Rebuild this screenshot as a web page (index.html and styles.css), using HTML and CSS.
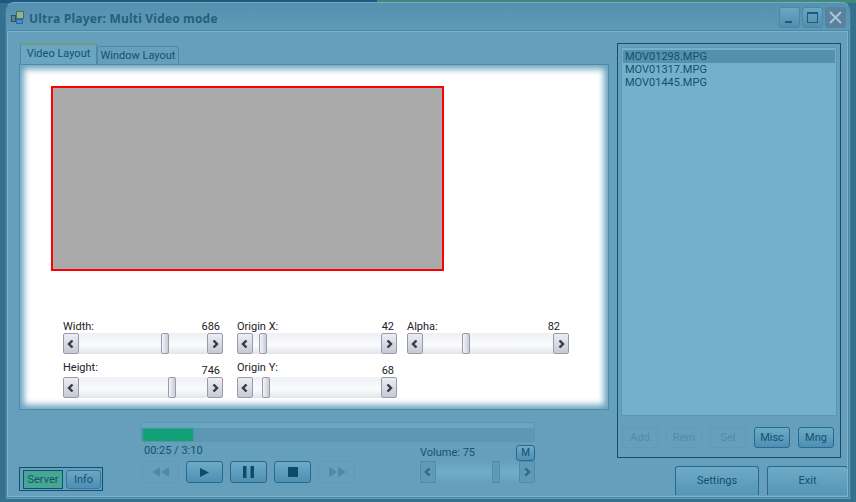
FILE: index.html
```html
<!DOCTYPE html>
<html lang="en">
  <head>
    <meta charset="UTF-8" />
    <title>Ultra Player: Multi Video mode</title>
    <link rel="stylesheet" href="styles.css">
  </head>
  <body>
    <svg class="defs" width="0" height="0">
      <symbol id="left" viewBox="0 0 8 8"><path d="M5.500 0.500 2 4l3.500 3.500" fill="none" stroke="currentColor" stroke-width="2.400"/></symbol>
      <symbol id="right" viewBox="0 0 8 8"><path d="M2.500 0.500 6 4 2.500 7.500" fill="none" stroke="currentColor" stroke-width="2.400"/></symbol>
    </svg>
    <div class="window">
      <div class="titlebar">
        <svg class="app-icon" width="14" height="14" viewBox="0 0 14 14">
          <rect x="0.500" y="4.500" width="4" height="6" fill="#5d7f92" stroke="#2f5266"/>
          <rect x="5.500" y="0.500" width="7" height="7" fill="#8fb58d" stroke="#47706a"/>
          <rect x="5.500" y="8.500" width="6" height="4" fill="#3f8fd0" stroke="#2b6a9c"/>
        </svg>
        <span class="title">Ultra Player: Multi Video mode</span>
        <div class="caption-buttons">
          <div class="caption-btn"><svg width="19" height="19"><rect x="5" y="13" width="7" height="2" fill="#1f5a7a"/></svg></div>
          <div class="caption-btn"><svg width="19" height="19"><rect x="4.500" y="4.500" width="10" height="10" fill="none" stroke="#1f5a7a"/><rect x="4" y="4" width="11" height="2" fill="#1f5a7a"/></svg></div>
          <div class="caption-btn close"><svg width="19" height="19"><path d="M4 4l11 11M15 4 4 15" stroke="#9fcadb" stroke-width="2"/></svg></div>
        </div>
      </div>
      <div class="client">
        <div class="left-col">
          <div class="tabs">
            <div class="tab active">Video Layout</div>
            <div class="tab">Window Layout</div>
          </div>
          <div class="tab-body">
            <div class="preview"></div>
            <div class="sliders">
              <div class="slider">
                <div class="slider-head"><span>Width:</span><span>686</span></div>
                <div class="scroll"><div class="arrow"><svg width="8" height="8"><use href="#left"/></svg></div><div class="track"><div class="thumb" style="margin-left:82px"></div></div><div class="arrow"><svg width="8" height="8"><use href="#right"/></svg></div></div>
              </div>
              <div class="slider">
                <div class="slider-head"><span>Origin X:</span><span>42</span></div>
                <div class="scroll"><div class="arrow"><svg width="8" height="8"><use href="#left"/></svg></div><div class="track"><div class="thumb" style="margin-left:6px"></div></div><div class="arrow"><svg width="8" height="8"><use href="#right"/></svg></div></div>
              </div>
              <div class="slider alpha">
                <div class="slider-head"><span>Alpha:</span><span>82</span></div>
                <div class="scroll"><div class="arrow"><svg width="8" height="8"><use href="#left"/></svg></div><div class="track"><div class="thumb" style="margin-left:39px"></div></div><div class="arrow"><svg width="8" height="8"><use href="#right"/></svg></div></div>
              </div>
              <div class="slider">
                <div class="slider-head"><span class="raised">Height:</span><span>746</span></div>
                <div class="scroll"><div class="arrow"><svg width="8" height="8"><use href="#left"/></svg></div><div class="track"><div class="thumb" style="margin-left:89px"></div></div><div class="arrow"><svg width="8" height="8"><use href="#right"/></svg></div></div>
              </div>
              <div class="slider">
                <div class="slider-head"><span class="raised">Origin Y:</span><span>68</span></div>
                <div class="scroll"><div class="arrow"><svg width="8" height="8"><use href="#left"/></svg></div><div class="track"><div class="thumb" style="margin-left:9px"></div></div><div class="arrow"><svg width="8" height="8"><use href="#right"/></svg></div></div>
              </div>
            </div>
          </div>
          <div class="bottom">
            <div class="modes">
              <div class="mode on">Server</div>
              <div class="mode">Info</div>
            </div>
            <div class="player">
              <div class="progress"><div class="progress-fill"></div></div>
              <div class="player-row">
                <div class="transport-col">
                  <div class="time">00:25 / 3:10</div>
                  <div class="transport">
                    <div class="t-btn off"><svg width="18" height="10" viewBox="0 0 18 10"><path d="M8 0v10L0 5zM17 0v10L9 5z" fill="#4d89a6"/></svg></div>
                    <div class="t-btn"><svg width="9" height="9" viewBox="0 0 9 9"><path d="M0 0v9l9-4.500z" fill="#0e4a69"/></svg></div>
                    <div class="t-btn"><svg width="11" height="12" viewBox="0 0 11 12"><path d="M0 0h3.500v12H0zM7.500 0H11v12H7.500z" fill="#0e4a69"/></svg></div>
                    <div class="t-btn"><svg width="10" height="10"><rect width="10" height="10" fill="#0e4a69"/></svg></div>
                    <div class="t-btn off"><svg width="18" height="10" viewBox="0 0 18 10"><path d="M1 0v10l8-5zM10 0v10l8-5z" fill="#4d89a6"/></svg></div>
                  </div>
                </div>
                <div class="volume">
                  <div class="volume-head"><span>Volume: 75</span><div class="mute">M</div></div>
                  <div class="scroll dim"><div class="arrow"><svg width="8" height="8"><use href="#left"/></svg></div><div class="track"><div class="thumb" style="margin-left:56px"></div></div><div class="arrow"><svg width="8" height="8"><use href="#right"/></svg></div></div>
                </div>
              </div>
            </div>
          </div>
        </div>
        <div class="right-col">
          <div class="list-box">
            <div class="list">
              <div class="list-item selected">MOV01298.MPG</div>
              <div class="list-item">MOV01317.MPG</div>
              <div class="list-item">MOV01445.MPG</div>
            </div>
            <div class="list-buttons">
              <div class="btn off">Add</div>
              <div class="btn off">Rem</div>
              <div class="btn off">Sel</div>
              <div class="btn">Misc</div>
              <div class="btn">Mng</div>
            </div>
          </div>
          <div class="footer-buttons">
            <div class="footer-btn settings">Settings</div>
            <div class="footer-btn exit">Exit</div>
          </div>
        </div>
      </div>
    </div>
  </body>
</html>
```

FILE: styles.css
```css
/* Ultra Player window */
html, body {
  margin: 0;
  height: 100%;
}

body {
  width: 856px;
  height: 502px;
  overflow: hidden;
  background:
    linear-gradient(to right, #1c5a80 0, #1c5a80 377px, #3f8a7c 377px) top / 100% 3px no-repeat,
    #35718f;
  font-family: Roboto, "Liberation Sans", sans-serif;
  font-size: 11px;
  color: #14516f;
}

.defs {
  position: absolute;
}

.window {
  box-sizing: border-box;
  width: 846px;
  height: 497px;
  margin: 2px 0 0 5px;
  background: linear-gradient(to bottom, #5590ae, #5f9bb8 28px);
  border-radius: 9px 9px 0 0;
  border: 1px solid #3a7d9c;
  border-top-color: #74acc6;
  border-bottom: none;
}

.titlebar {
  display: flex;
  align-items: flex-start;
  box-sizing: border-box;
  height: 27px;
  padding: 8px 0 0 5px;
}

.app-icon {
  margin-right: 4px;
}

.title {
  font-family: "Open Sans", sans-serif;
  font-weight: 700;
  font-size: 12px;
  line-height: 15px;
  letter-spacing: 0.17px;
  color: #235f7f;
}

.caption-buttons {
  display: flex;
  gap: 2px;
  margin-left: auto;
  margin-right: 4px;
  margin-top: -4px;
}

.caption-btn {
  width: 19px;
  height: 19px;
  border-radius: 3px;
  border: 1px solid #4b87a6;
  background: linear-gradient(to bottom, #6aa7c3, #4f8fae);
}

.caption-btn.close {
  background: #607f9d;
}

.client {
  display: flex;
  gap: 8px;
  box-sizing: border-box;
  height: 468px;
  margin-right: 1px;
  padding: 13px 0 0 12px;
  background: #669fbc;
  border: 1px solid #4a87a5;
  outline: 1px solid #7fb2c9;
  outline-offset: -2px;
}

/* left side */
.left-col {
  display: flex;
  flex-direction: column;
  width: 590px;
}

.tabs {
  display: flex;
  align-items: flex-end;
  height: 20px;
  margin-left: 1px;
}

.tab {
  box-sizing: border-box;
  width: 82px;
  height: 18px;
  padding-top: 2px;
  text-align: center;
  border: 1px solid #4d89a8;
  border-bottom: none;
  border-radius: 3px 3px 0 0;
  background: #669fbc;
}

.tab.active {
  width: 77px;
  height: 21px;
  padding-top: 2px;
  border-top: 2px solid #6f9f7a;
  background: #6aa5c1;
}

.tab-body {
  display: flex;
  flex-direction: column;
  box-sizing: border-box;
  height: 346px;
  background: #fff;
  border: 1px solid #4d89a8;
  box-shadow: inset 0 0 6px 4px #69a3bf;
}

.preview {
  box-sizing: border-box;
  width: 393px;
  height: 185px;
  margin: 21px 0 0 31px;
  background: #aaa;
  border: 2px solid #f00;
}

.sliders {
  display: grid;
  grid-template-columns: 160px 160px 162px;
  column-gap: 14px;
  margin: auto 0 11px 43px;
  color: #222;
}

.slider {
  display: flex;
  flex-direction: column;
}

.slider.alpha {
  width: 162px;
  margin-left: -4px;
}

.slider-head {
  display: flex;
  justify-content: space-between;
  align-items: flex-end;
  height: 23px;
  padding-right: 3px;
  line-height: 13px;
}

.alpha .slider-head {
  padding-right: 9px;
}

.raised {
  margin-bottom: 3px;
}

.scroll {
  display: flex;
  height: 21px;
  color: #3a3a44;
}

.arrow {
  display: flex;
  align-items: center;
  justify-content: center;
  box-sizing: border-box;
  width: 16px;
  height: 100%;
  border: 1px solid #9a9aa8;
  border-radius: 2px;
  background: linear-gradient(to bottom, #eceef4, #c6c8d6);
}

.track {
  flex: 1;
  background: linear-gradient(to bottom, #eef0f5, #fafbfc 60%, #e4e4ec);
}

.thumb {
  box-sizing: border-box;
  width: 8px;
  height: 100%;
  border: 1px solid #9a9aa8;
  border-radius: 2px;
  background: linear-gradient(to right, #f4f5f8, #c9cbd8);
}

/* bottom controls */
.bottom {
  display: flex;
  align-items: flex-end;
  height: 73px;
  margin-top: 12px;
}

.modes {
  display: flex;
  gap: 3px;
  box-sizing: border-box;
  width: 84px;
  height: 24px;
  margin: 0 38px 4px 0;
  padding: 2px 0 0 3px;
  border: 1px solid #0f4f6f;
}

.mode {
  box-sizing: border-box;
  width: 35px;
  height: 19px;
  line-height: 17px;
  text-align: center;
  border: 1px solid #3577a1;
  border-radius: 3px;
  background: linear-gradient(to bottom, #6aa7c3, #4f8fb6);
}

.mode.on {
  width: 40px;
  border-color: #0f4f6f;
  border-radius: 0;
  background: #46a893;
}

.player {
  display: flex;
  flex-direction: column;
  align-self: flex-start;
  width: 394px;
}

.progress {
  box-sizing: border-box;
  height: 20px;
  padding: 6px 1px 0;
  border: 1px solid #5b95b1;
  border-radius: 3px;
  background: linear-gradient(to bottom, #6ba6c1 0, #6ba6c1 5px, #5d97b3 5px);
}

.progress-fill {
  width: 50px;
  height: 12px;
  background: #12a176;
  box-shadow: 0 -1px 2px rgba(18, 161, 118, 0.5);
}

.player-row {
  display: flex;
  justify-content: space-between;
}

.transport-col {
  display: flex;
  flex-direction: column;
}

.time {
  box-sizing: border-box;
  height: 19px;
  padding: 2px 0 0 3px;
  line-height: 13px;
}

.transport {
  display: flex;
  gap: 7px;
  margin-left: 1px;
}

.t-btn {
  display: flex;
  align-items: center;
  justify-content: center;
  box-sizing: border-box;
  width: 37px;
  height: 22px;
  border: 1px solid #256a92;
  border-radius: 3px;
  background: linear-gradient(to bottom, #6dabc7, #4f8fb2);
}

.t-btn.off {
  border-color: #5f9ab6;
  background: #669fbc;
}

.volume {
  display: flex;
  flex-direction: column;
  width: 115px;
  margin-top: 2px;
}

.volume-head {
  display: flex;
  justify-content: space-between;
  align-items: center;
  height: 17px;
}

.mute {
  box-sizing: border-box;
  width: 19px;
  height: 16px;
  line-height: 14px;
  text-align: center;
  font-size: 10px;
  border: 1px solid #256a92;
  border-radius: 3px;
  background: linear-gradient(to bottom, #6dabc7, #4f8fb2);
}

.scroll.dim {
  height: 22px;
  color: #2c6b8c;
}

.scroll.dim .arrow,
.scroll.dim .thumb {
  border-color: #4f8bab;
  background: #5f99b6;
}

.scroll.dim .track {
  background: linear-gradient(to bottom, #65a0bd, #70adc8 50%, #65a0bd);
}

/* right side */
.right-col {
  display: flex;
  flex-direction: column;
  width: 224px;
  margin-top: -1px;
}

.list-box {
  box-sizing: border-box;
  height: 415px;
  padding: 3px;
  border: 1px solid #0f4f6f;
}

.list {
  box-sizing: border-box;
  height: 369px;
  padding: 2px 1px;
  background: #72b0cb;
  border: 1px solid #5b97b4;
}

.list-item {
  height: 13px;
  padding-left: 2px;
  line-height: 13px;
}

.list-item.selected {
  background: #5490ae;
}

.list-buttons {
  display: flex;
  gap: 8px;
  margin: 11px 0 0 1px;
}

.btn {
  box-sizing: border-box;
  width: 36px;
  height: 21px;
  line-height: 19px;
  text-align: center;
  border: 1px solid #256a92;
  border-radius: 3px;
  background: linear-gradient(to bottom, #6dabc7, #4f8fb2);
}

.btn.off {
  color: #4f8bab;
  border-color: #5f9ab6;
  background: #669fbc;
}

.footer-buttons {
  display: flex;
  gap: 8px;
  margin: 8px 0 0 58px;
}

.footer-btn {
  flex-shrink: 0;
  box-sizing: border-box;
  height: 29px;
  line-height: 28px;
  text-align: center;
  border: 1px solid #256a92;
  border-bottom: none;
  border-radius: 3px 3px 0 0;
  background: linear-gradient(to bottom, #6dabc7, #5595b6);
}

.footer-btn.settings {
  width: 84px;
}

.footer-btn.exit {
  width: 81px;
}
```
